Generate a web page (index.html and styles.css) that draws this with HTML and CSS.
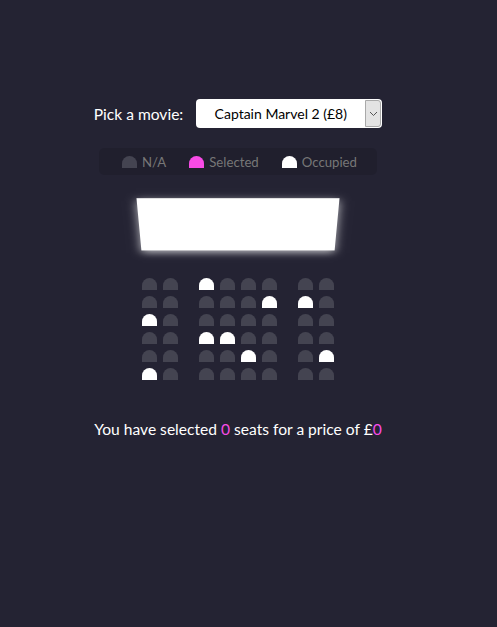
FILE: index.html
```html
<!DOCTYPE html>
<html lang="en">
<head>
<meta charset="UTF-8">
<title>Movie Seat Booking</title>
<link rel="stylesheet" href="styles.css">
</head>
<body>
<div class="page">
  <div class="movie-container">
    <label class="movie-label">Pick a movie:</label>
    <div class="select">
      <span class="select-text">Captain Marvel 2 (£8)</span>
      <span class="select-arrow">
        <svg width="9" height="6" viewBox="0 0 9 6"><path d="M1 1 L4.5 4.5 L8 1" fill="none" stroke="#555" stroke-width="1"/></svg>
      </span>
    </div>
  </div>

  <ul class="showcase">
    <li><div class="seat"></div><small>N/A</small></li>
    <li><div class="seat selected"></div><small>Selected</small></li>
    <li><div class="seat occupied"></div><small>Occupied</small></li>
  </ul>

  <div class="container">
    <div class="screen"></div>
    <div class="row">
      <div class="seat"></div><div class="seat"></div><div class="seat occupied"></div><div class="seat"></div>
      <div class="seat"></div><div class="seat"></div><div class="seat"></div><div class="seat"></div>
    </div>
    <div class="row">
      <div class="seat"></div><div class="seat"></div><div class="seat"></div><div class="seat"></div>
      <div class="seat"></div><div class="seat occupied"></div><div class="seat occupied"></div><div class="seat"></div>
    </div>
    <div class="row">
      <div class="seat occupied"></div><div class="seat"></div><div class="seat"></div><div class="seat"></div>
      <div class="seat"></div><div class="seat"></div><div class="seat"></div><div class="seat"></div>
    </div>
    <div class="row">
      <div class="seat"></div><div class="seat"></div><div class="seat occupied"></div><div class="seat occupied"></div>
      <div class="seat"></div><div class="seat"></div><div class="seat"></div><div class="seat"></div>
    </div>
    <div class="row">
      <div class="seat"></div><div class="seat"></div><div class="seat"></div><div class="seat"></div>
      <div class="seat occupied"></div><div class="seat"></div><div class="seat"></div><div class="seat occupied"></div>
    </div>
    <div class="row">
      <div class="seat occupied"></div><div class="seat"></div><div class="seat"></div><div class="seat"></div>
      <div class="seat"></div><div class="seat"></div><div class="seat"></div><div class="seat"></div>
    </div>
  </div>

  <p class="text">You have selected <span>0</span> seats for a price of £<span>0</span></p>
</div>
</body>
</html>
```

FILE: styles.css
```css
* {
  box-sizing: border-box;
}

body {
  margin: 0;
  background-color: #242333;
  color: #fff;
  font-family: "Lato", "Noto Sans", sans-serif;
  height: 627px;
  overflow: hidden;
}

.page {
  width: 476px;
  display: flex;
  flex-direction: column;
  align-items: center;
  padding-top: 99px;
}

.movie-container {
  display: flex;
  align-items: center;
  height: 29px;
}

.movie-label {
  font-size: 15.6px;
}

.select {
  margin-left: 13px;
  width: 186px;
  height: 29px;
  background-color: #fff;
  border-radius: 4px;
  display: flex;
  align-items: stretch;
  overflow: hidden;
}

.select-text {
  flex: 1;
  display: flex;
  align-items: center;
  justify-content: center;
  color: #000;
  font-size: 14px;
}

.select-arrow {
  width: 16px;
  margin: 1px 1px 1px 0;
  background-color: #e3e3e3;
  border: 1px solid #a9a9a9;
  border-radius: 0 3px 3px 0;
  display: flex;
  align-items: center;
  justify-content: center;
}

.showcase {
  margin: 20px 0 0;
  list-style-type: none;
  background: rgba(0, 0, 0, 0.1);
  padding: 5px 10px;
  border-radius: 5px;
  color: #777;
  display: flex;
  justify-content: space-between;
  height: 27px;
}

.showcase li {
  display: flex;
  align-items: center;
  justify-content: center;
  margin: 0 10px;
}

.showcase li small {
  margin-left: 2px;
  font-size: 13.2px;
}

.seat {
  background-color: #444451;
  height: 12px;
  width: 15px;
  margin: 3px;
  border-top-left-radius: 10px;
  border-top-right-radius: 10px;
}

.seat.selected {
  background-color: #f84be6;
}

.seat.occupied {
  background-color: #fff;
}

.row .seat:nth-of-type(2) {
  margin-right: 18px;
}

.row .seat:nth-last-of-type(2) {
  margin-left: 18px;
}

.container {
  perspective: 1000px;
  margin-top: 0;
  margin-bottom: 30px;
}

.row {
  display: flex;
}

.screen {
  background-color: #fff;
  height: 70px;
  width: 100%;
  margin: 15px 0;
  transform: rotateX(-45deg);
  box-shadow: 0 3px 10px rgba(255, 255, 255, 0.7);
}

.text {
  margin: 7px 0 5px;
  font-size: 15.6px;
}

.text span {
  color: #f84be6;
}
```
